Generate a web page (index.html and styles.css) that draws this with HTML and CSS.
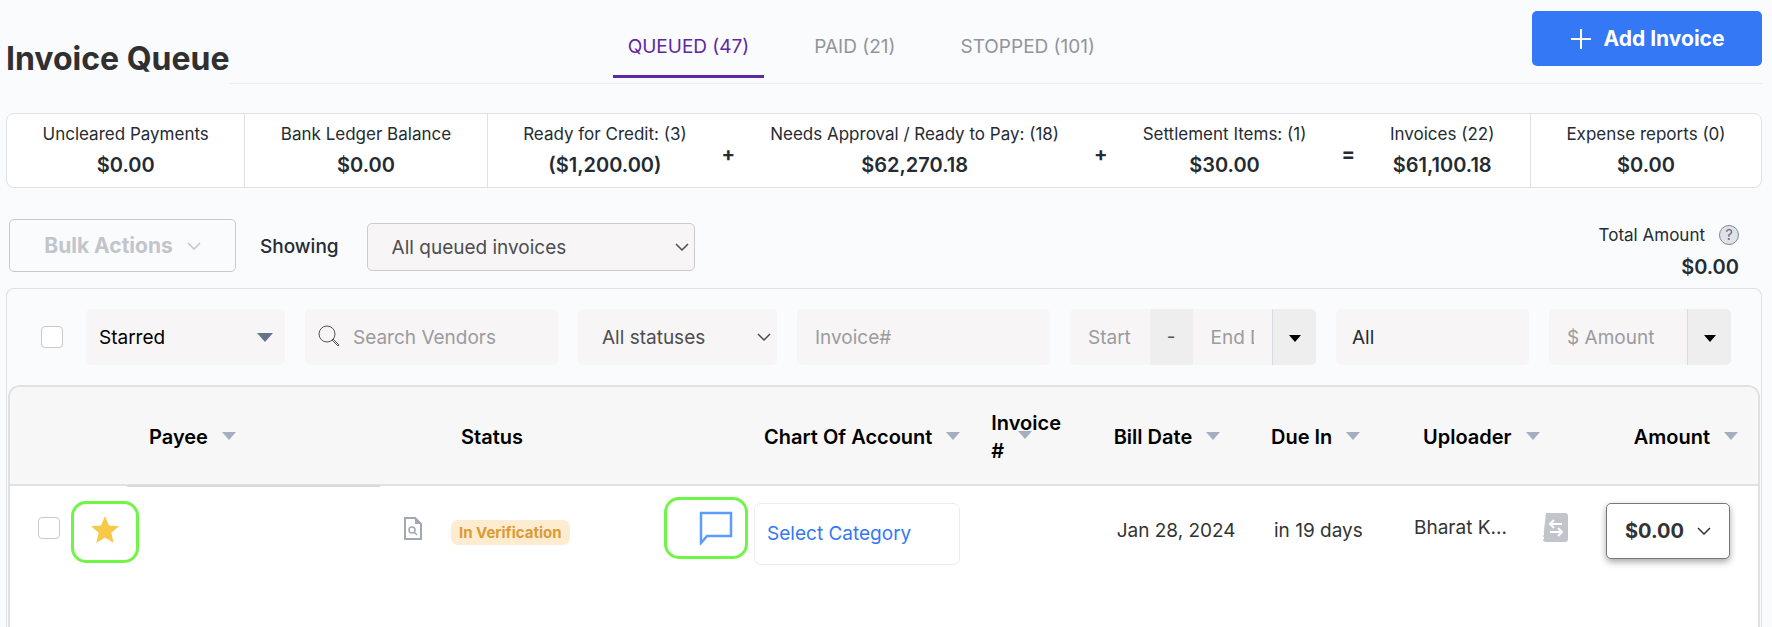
FILE: index.html
```html
<!DOCTYPE html>
<html lang="en">
<head>
  <meta charset="UTF-8">
  <title>Invoice Queue</title>
  <link rel="stylesheet" href="styles.css">
</head>
<body>
  <header class="header">
    <h1>Invoice Queue</h1>
    <div class="header-bar">
      <nav class="tabs">
        <a href="#queued" class="tab active">QUEUED (47)</a>
        <a href="#paid" class="tab">PAID (21)</a>
        <a href="#stopped" class="tab">STOPPED (101)</a>
      </nav>
      <button type="button" class="add-btn">
        <svg width="22" height="22" viewBox="0 0 22 22"><path d="M11 1v20M1 11h20"/></svg>
        Add Invoice
      </button>
    </div>
  </header>

  <section class="summary">
    <div class="summary-group">
      <div class="stat"><span>Uncleared Payments</span><strong>$0.00</strong></div>
    </div>
    <div class="summary-group">
      <div class="stat"><span>Bank Ledger Balance</span><strong>$0.00</strong></div>
    </div>
    <div class="summary-group">
      <div class="stat"><span>Ready for Credit: (3)</span><strong>($1,200.00)</strong></div>
      <b class="operator">+</b>
      <div class="stat"><span>Needs Approval / Ready to Pay: (18)</span><strong>$62,270.18</strong></div>
      <b class="operator">+</b>
      <div class="stat"><span>Settlement Items: (1)</span><strong>$30.00</strong></div>
      <b class="operator">=</b>
      <div class="stat"><span>Invoices (22)</span><strong>$61,100.18</strong></div>
    </div>
    <div class="summary-group">
      <div class="stat"><span>Expense reports (0)</span><strong>$0.00</strong></div>
    </div>
  </section>

  <div class="toolbar">
    <button type="button" class="bulk-btn" disabled>
      Bulk Actions
      <svg class="chevron" width="14" height="8" viewBox="0 0 14 8"><path d="M1 1l6 6 6-6"/></svg>
    </button>
    <label for="showing">Showing</label>
    <div class="select showing-select">
      <select id="showing"><option>All queued invoices</option></select>
      <svg class="chevron" width="14" height="8" viewBox="0 0 14 8"><path d="M1 1l6 6 6-6"/></svg>
    </div>
    <div class="total">
      <div class="total-label">
        Total Amount
        <button type="button" class="help-btn" aria-label="About total amount">?</button>
      </div>
      <strong>$0.00</strong>
    </div>
  </div>

  <main class="panel">
    <form class="filters">
      <input type="checkbox" aria-label="Select all">
      <div class="select starred">
        <select aria-label="Starred filter"><option>Starred</option></select>
        <svg class="caret" width="16" height="9" viewBox="0 0 16 9"><path d="M0 0h16L8 9z"/></svg>
      </div>
      <div class="search">
        <svg width="22" height="22" viewBox="0 0 22 22"><circle cx="9" cy="9" r="8"/><path d="M14 15l1-1 6 6-1 1z"/></svg>
        <input type="text" class="field" placeholder="Search Vendors" aria-label="Search vendors">
      </div>
      <div class="select">
        <select aria-label="Status"><option>All statuses</option></select>
        <svg class="chevron" width="14" height="8" viewBox="0 0 14 8"><path d="M1 1l6 6 6-6"/></svg>
      </div>
      <input type="text" class="field" placeholder="Invoice#" aria-label="Invoice number">
      <div class="input-group dates">
        <input type="text" class="field" placeholder="Start Date" aria-label="Start date">
        <span class="separator">-</span>
        <input type="text" class="field" placeholder="End Date" aria-label="End date">
        <button type="button" aria-label="Date options"><svg width="12" height="7" viewBox="0 0 12 7"><path d="M0 0h12L6 7z"/></svg></button>
      </div>
      <input type="text" class="field uploader-filter" value="All" aria-label="Uploader">
      <div class="input-group">
        <input type="text" class="field" placeholder="$ Amount" aria-label="Amount">
        <button type="button" aria-label="Amount options"><svg width="12" height="7" viewBox="0 0 12 7"><path d="M0 0h12L6 7z"/></svg></button>
      </div>
    </form>

    <div class="table-wrap">
      <table>
        <colgroup>
          <col class="col-check"><col class="col-star"><col class="col-payee"><col class="col-doc">
          <col class="col-status"><col class="col-chat"><col class="col-chart"><col class="col-invoice">
          <col class="col-bill"><col class="col-due"><col class="col-uploader"><col class="col-ledger"><col class="col-amount">
        </colgroup>
        <thead>
          <tr>
            <th colspan="2"></th>
            <th class="payee">Payee<i class="sort"></i></th>
            <th></th>
            <th>Status</th>
            <th></th>
            <th>Chart Of Account<i class="sort"></i></th>
            <th class="invoice-no">Invoice<br>#<i class="sort"></i></th>
            <th>Bill Date<i class="sort"></i></th>
            <th>Due In<i class="sort"></i></th>
            <th colspan="2" class="uploader">Uploader<i class="sort"></i></th>
            <th class="amount">Amount<i class="sort"></i></th>
          </tr>
        </thead>
        <tbody>
          <tr>
            <td class="check-cell"><input type="checkbox" aria-label="Select invoice"></td>
            <td class="star-cell">
              <button type="button" class="highlight star-btn" aria-label="Starred">
                <svg width="28" height="27" viewBox="0 0 28 27"><path d="M14 0l4 9.500 10 .8-7.700 6.500L22.700 27 14 21.500 5.300 27l2.400-10.200L0 10.300l10-.8z"/></svg>
              </button>
            </td>
            <td></td>
            <td class="doc-cell">
              <svg width="18" height="23" viewBox="0 0 18 23">
                <path class="doc-outline" d="M1 1h10l6 6v15H1z"/>
                <path class="doc-fold" d="M11 0v7h7z"/>
                <circle cx="8" cy="13" r="3"/><path class="doc-outline thin" d="M10 15l3 3"/>
              </svg>
            </td>
            <td class="status-cell"><span class="badge">In Verification</span></td>
            <td class="chat-cell">
              <button type="button" class="highlight chat-btn" aria-label="Comments">
                <svg width="34" height="34" viewBox="0 0 34 34"><path d="M2 2h30v23H8l-6 7z"/></svg>
              </button>
            </td>
            <td class="category-cell"><a href="#category" class="category">Select Category</a></td>
            <td></td>
            <td class="text-cell">Jan 28, 2024</td>
            <td class="text-cell">in 19 days</td>
            <td class="uploader-cell">Bharat K...</td>
            <td class="ledger-cell">
              <svg width="26" height="29" viewBox="0 0 26 29">
                <path class="ledger-page" d="M4 0h19a3 3 0 0 1 3 3v23a3 3 0 0 1-3 3H4a3 3 0 0 1-3-3z"/>
                <path class="ledger-holes" d="M1 4v22"/>
                <path class="ledger-arrows" d="M20 11H8m4-4l-4 4 4 4M8 19h12m-4-4l4 4-4 4"/>
              </svg>
            </td>
            <td class="amount-cell">
              <button type="button" class="amount-btn">
                $0.00
                <svg class="chevron" width="14" height="8" viewBox="0 0 14 8"><path d="M1 1l6 6 6-6"/></svg>
              </button>
            </td>
          </tr>
        </tbody>
      </table>
    </div>
  </main>
</body>
</html>
```

FILE: styles.css
```css
:root {
  --page-bg: #fafbfd;
  --field-bg: #f7f5f6;
  --addon-bg: #eeeeee;
  --border-color: #dfe1e3;
  --text-color: #252b33;
  --muted: #9b9b9f;
  --blue: #3478f6;
  --purple: #5e27a3;
  --green: #6ff546;
}

* {
  box-sizing: border-box;
}

body {
  margin: 0;
  padding: 11px 10px 0 6px;
  min-height: 100vh;
  display: flex;
  flex-direction: column;
  font-family: Inter, "Liberation Sans", sans-serif;
  font-size: 19px;
  color: var(--text-color);
  background-color: var(--page-bg);
}

button, input, select {
  font: inherit;
  color: inherit;
}

button {
  cursor: pointer;
}

.header {
  display: flex;
}

.header h1 {
  margin: 0;
  padding-top: 28px;
  font-size: 32px;
  line-height: 40px;
  font-weight: 700;
  color: #303030;
}

.header-bar {
  flex: 1;
  display: flex;
  align-items: flex-start;
  justify-content: flex-end;
  height: 73px;
  border-bottom: 1px solid #ebedef;
}

.tabs {
  display: flex;
  gap: 35px;
  margin-right: auto;
  margin-left: 25%;
  padding-top: 22px;
}

.tab {
  height: 45px;
  padding: 0 15px;
  line-height: 28px;
  color: #93939d;
  text-decoration: none;
}

.tab.active {
  color: var(--purple);
  border-bottom: 3px solid var(--purple);
}

.add-btn {
  display: flex;
  align-items: center;
  justify-content: center;
  gap: 12px;
  width: 230px;
  height: 55px;
  border: none;
  border-radius: 5px;
  background-color: var(--blue);
  color: white;
  font-size: 21px;
  font-weight: 700;
}

.add-btn svg {
  stroke: white;
  stroke-width: 2;
}

.summary {
  display: flex;
  margin-top: 29px;
  background-color: white;
  border: 1px solid var(--border-color);
  border-radius: 8px;
}

.summary-group {
  flex: 1 1 auto;
  display: flex;
  justify-content: center;
  padding: 5px 0 6px;
}

.summary-group + .summary-group {
  border-left: 1px solid var(--border-color);
}

.stat {
  display: flex;
  flex-direction: column;
  align-items: center;
  padding: 0 35px;
  font-size: 17px;
  line-height: 30px;
  white-space: nowrap;
}

.stat strong, .total strong {
  font-size: 20px;
  line-height: 32px;
  font-weight: 600;
}

.operator {
  align-self: center;
  padding-top: 8px;
  font-size: 20px;
}

.toolbar {
  display: flex;
  align-items: flex-start;
  padding: 31px 23px 0 3px;
}

.bulk-btn {
  display: flex;
  align-items: center;
  justify-content: center;
  gap: 14px;
  width: 227px;
  height: 53px;
  background: none;
  border: 1px solid #c5c8d0;
  border-radius: 5px;
  color: #c2c5ca;
  font-size: 21px;
  font-weight: 700;
  cursor: default;
}

.chevron {
  fill: none;
  stroke: currentColor;
  stroke-width: 1.5;
}

.toolbar label {
  margin-left: 24px;
  padding-top: 14px;
  line-height: 28px;
  font-weight: 500;
}

.select {
  position: relative;
  color: #4c4d50;
}

.select select {
  width: 100%;
  height: 56px;
  padding: 0 32px 0 24px;
  border: none;
  border-radius: 5px;
  background-color: var(--field-bg);
  appearance: none;
}

.select svg {
  position: absolute;
  top: 50%;
  right: 6px;
  margin-top: -4px;
  pointer-events: none;
}

.showing-select {
  width: 328px;
  margin: 4px 0 0 28px;
}

.showing-select select {
  height: 48px;
  border: 1px solid #c8cacc;
}

.total {
  display: flex;
  flex-direction: column;
  align-items: flex-end;
  height: 64px;
  margin-left: auto;
}

.total-label {
  display: flex;
  align-items: center;
  gap: 14px;
  font-size: 17px;
  line-height: 32px;
}

.help-btn {
  width: 20px;
  height: 20px;
  padding: 0;
  border: 1px solid #7f8794;
  border-radius: 50%;
  background-color: #dfe3e9;
  color: #687080;
  font-size: 15px;
  line-height: 18px;
}

.panel {
  flex: 1;
  display: flex;
  flex-direction: column;
  margin-top: 5px;
  padding: 0 1px;
  border: 1px solid var(--border-color);
  border-bottom: none;
  border-radius: 8px 8px 0 0;
}

.filters {
  display: grid;
  grid-template-columns: 25px 199fr 253fr 199fr 253fr 246fr 193fr 182fr;
  column-gap: 20px;
  align-items: center;
  padding: 20px 29px 20px 33px;
}

input[type="checkbox"] {
  width: 22px;
  height: 22px;
  margin: 0;
  border: 1px solid #c9c9cb;
  border-radius: 4px;
  background-color: white;
  appearance: none;
}

.field {
  width: 100%;
  min-width: 0;
  height: 56px;
  padding: 0 18px;
  border: none;
  border-radius: 5px;
  background-color: var(--field-bg);
}

.field::placeholder {
  color: var(--muted);
  opacity: 1;
}

.starred select {
  padding-left: 13px;
  color: black;
}

.starred .caret {
  right: 12px;
  fill: #64748b;
}

.search {
  position: relative;
}

.search svg {
  position: absolute;
  top: 16px;
  left: 13px;
  fill: none;
  stroke: #555;
}

.search .field {
  padding-left: 48px;
}

.uploader-filter {
  padding-left: 16px;
}

.input-group {
  display: flex;
  border-radius: 5px;
  overflow: hidden;
}

.input-group .field {
  flex: 1;
  border-radius: 0;
}

.separator {
  width: 43px;
  background-color: var(--addon-bg);
  line-height: 56px;
  text-align: center;
  color: #555;
}

.input-group button {
  width: 44px;
  padding: 0;
  border: none;
  border-left: 1px solid #d8dce2;
  background-color: var(--addon-bg);
}

.input-group svg {
  vertical-align: middle;
}

.table-wrap {
  flex: 1;
  border: 2px solid var(--border-color);
  border-bottom: none;
  border-radius: 12px 12px 0 0;
  background-color: white;
}

table {
  width: 100%;
  border-collapse: separate;
  border-spacing: 0;
  table-layout: fixed;
}

.col-check { width: 61px; }
.col-star { width: 68px; }
.col-payee { width: 257px; }
.col-doc { width: 55px; }
.col-chat { width: 90px; }
.col-chart { width: 13%; }
.col-invoice { width: 7%; }
.col-bill { width: 9%; }
.col-due { width: 143px; }
.col-uploader { width: 132px; }
.col-ledger { width: 60px; }
.col-amount { width: 162px; }

th {
  position: relative;
  height: 99px;
  padding: 2px 0 0 10px;
  border-bottom: 2px solid var(--border-color);
  background-color: #f7f7f7;
  color: black;
  font-size: 20px;
  line-height: 28px;
  font-weight: 600;
  text-align: left;
  white-space: nowrap;
}

th:first-child {
  border-top-left-radius: 10px;
}

th:last-child {
  border-top-right-radius: 10px;
}

.sort {
  display: inline-block;
  margin-left: 14px;
  vertical-align: 4px;
  border: 7px solid transparent;
  border-top: 8px solid #a3afbf;
  border-bottom: none;
}

/* caret overlaps the wrapped heading */
.invoice-no .sort {
  position: absolute;
  top: 44px;
  left: 37px;
  margin: 0;
}

.payee::after {
  content: "";
  position: absolute;
  left: -12px;
  right: 16px;
  bottom: -3px;
  height: 2px;
  background-color: #dadada;
}

th.uploader {
  padding-left: 19px;
}

th.amount {
  padding-right: 20px;
  text-align: right;
}

td {
  padding: 0;
  line-height: 28px;
  color: #333;
  vertical-align: top;
}

td svg {
  display: block;
}

.check-cell {
  padding: 31px 0 0 28px;
}

.check-cell input {
  display: block;
}

.star-cell {
  padding-top: 15px;
}

.highlight {
  display: flex;
  align-items: center;
  justify-content: center;
  height: 62px;
  padding: 0;
  border: 3px solid var(--green);
  border-radius: 15px;
  background: none;
}

.star-btn {
  width: 68px;
  padding-bottom: 6px;
}

.star-btn svg {
  fill: #f7c948;
}

.chat-cell {
  padding-top: 11px;
}

.chat-btn {
  width: 84px;
  justify-content: flex-end;
  padding-right: 12px;
}

.chat-btn path {
  fill: none;
  stroke: #5c9dfb;
  stroke-width: 2.5;
}

.doc-cell {
  padding: 31px 0 0 8px;
}

.doc-outline, .doc-cell circle {
  fill: none;
  stroke: #a0a8b4;
  stroke-width: 2;
}

.doc-cell circle, .doc-outline.thin {
  stroke-width: 1.5;
}

.doc-fold {
  fill: #a0a8b4;
}

.status-cell {
  padding-top: 34px;
}

.badge {
  display: block;
  width: max-content;
  padding: 0 8px;
  border-radius: 7px;
  background-color: #fdecd0;
  color: #dc9a35;
  font-size: 15px;
  line-height: 25px;
  font-weight: 700;
}

.category-cell {
  padding-top: 17px;
}

.category {
  display: block;
  width: 206px;
  padding: 0 12px;
  border: 1px solid #ececec;
  border-radius: 7px;
  color: var(--blue);
  line-height: 60px;
  text-decoration: none;
}

.text-cell {
  padding: 31px 0 0 13px;
}

.uploader-cell {
  padding: 28px 0 0 10px;
}

.ledger-cell {
  padding: 27px 0 0 6px;
}

.ledger-page {
  fill: #c1c4ca;
}

.ledger-holes {
  stroke: white;
  stroke-width: 2;
  stroke-dasharray: 2 2;
}

.ledger-arrows {
  fill: none;
  stroke: white;
  stroke-width: 2;
}

.amount-cell {
  padding: 17px 28px 0 0;
}

.amount-btn {
  display: flex;
  align-items: center;
  justify-content: center;
  gap: 13px;
  width: 124px;
  height: 56px;
  margin-left: auto;
  padding: 0;
  border: 1px solid #777;
  border-radius: 5px;
  background-color: white;
  box-shadow: 0 3px 7px rgba(0, 0, 0, 0.35);
  font-size: 20px;
  font-weight: 700;
}
```
